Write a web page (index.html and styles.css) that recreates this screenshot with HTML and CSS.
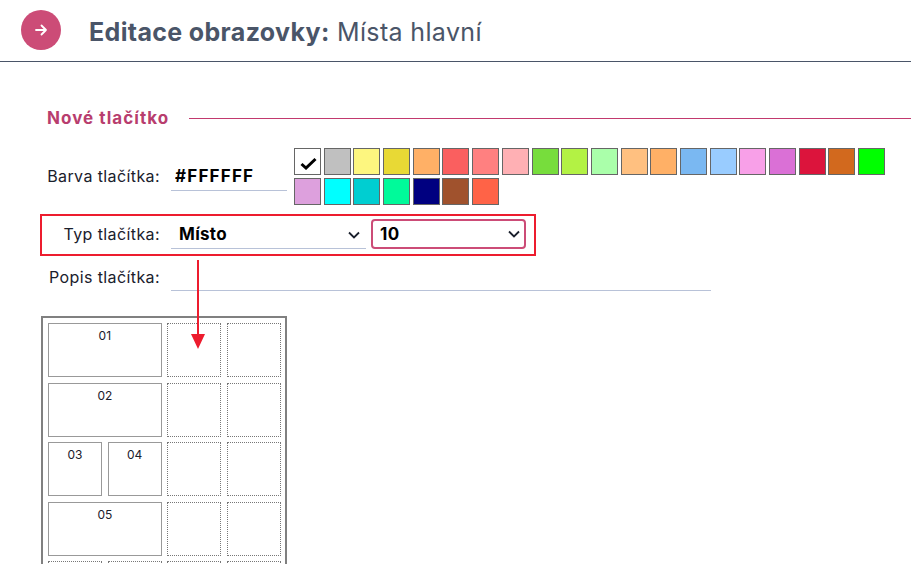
FILE: index.html
```html
<!DOCTYPE html>
<html lang="cs">
<head>
	<meta charset="utf-8">
	<title>Editace obrazovky</title>
	<link rel="stylesheet" href="styles.css">
</head>
<body>
<div id="container">

	<div class="header">
		<a class="back" href="#">
			<svg width="14" height="14" viewBox="0 0 14 14" fill="none" stroke="#fff" stroke-width="1.8" stroke-linecap="round" stroke-linejoin="round"><path d="M2 7h10M7.500 2.500 12 7l-4.500 4.500"/></svg>
		</a>
		<h1><b>Editace obrazovky:</b> Místa hlavní</h1>
	</div>

	<div class="body">
		<div class="section-title">
			<h2>Nové tlačítko</h2>
			<span class="section-line"></span>
		</div>

		<div class="row row-color">
			<label class="row-label">Barva tlačítka:</label>
			<input class="field field-hex" type="text" value="#FFFFFF">
			<div class="swatches">
				<span class="swatch swatch-on">
					<svg width="17" height="13" viewBox="0 0 17 13"><path d="M1.500 7 6 11 15.500 2" fill="none" stroke="#000" stroke-width="3"/></svg>
				</span>
				<span class="swatch c-silver"></span>
				<span class="swatch c-lemon"></span>
				<span class="swatch c-mustard"></span>
				<span class="swatch c-orange"></span>
				<span class="swatch c-red"></span>
				<span class="swatch c-salmon"></span>
				<span class="swatch c-rose"></span>
				<span class="swatch c-green"></span>
				<span class="swatch c-lime"></span>
				<span class="swatch c-mint"></span>
				<span class="swatch c-peach"></span>
				<span class="swatch c-orange"></span>
				<span class="swatch c-sky"></span>
				<span class="swatch c-pale"></span>
				<span class="swatch c-pink"></span>
				<span class="swatch c-orchid"></span>
				<span class="swatch c-crimson"></span>
				<span class="swatch c-choco"></span>
				<span class="swatch c-neon"></span>
				<span class="swatch c-plum"></span>
				<span class="swatch c-cyan"></span>
				<span class="swatch c-teal"></span>
				<span class="swatch c-spring"></span>
				<span class="swatch c-navy"></span>
				<span class="swatch c-sienna"></span>
				<span class="swatch c-tomato"></span>
			</div>
		</div>

		<div class="row row-type">
			<label class="row-label">Typ tlačítka:</label>
			<div class="select-wrap select-type">
				<select class="field field-type"><option>Místo</option></select>
				<svg class="chevron" width="12" height="8" viewBox="0 0 12 8"><path d="M1 1.500 6 6.500 11 1.500" fill="none" stroke="#1a202c" stroke-width="1.800"/></svg>
			</div>
			<div class="select-wrap select-place">
				<select class="field field-place"><option>10</option></select>
				<svg class="chevron" width="12" height="8" viewBox="0 0 12 8"><path d="M1 1.500 6 6.500 11 1.500" fill="none" stroke="#1a202c" stroke-width="1.800"/></svg>
			</div>
		</div>

		<div class="row row-desc">
			<label class="row-label">Popis tlačítka:</label>
			<input class="field field-desc" type="text">
		</div>

		<div class="screen">
			<div class="cell cell-wide">01</div>
			<div class="cell cell-empty"></div>
			<div class="cell cell-empty"></div>
			<div class="cell cell-wide">02</div>
			<div class="cell cell-empty"></div>
			<div class="cell cell-empty"></div>
			<div class="cell">03</div>
			<div class="cell">04</div>
			<div class="cell cell-empty"></div>
			<div class="cell cell-empty"></div>
			<div class="cell cell-wide">05</div>
			<div class="cell cell-empty"></div>
			<div class="cell cell-empty"></div>
			<div class="cell cell-empty"></div>
			<div class="cell cell-empty"></div>
			<div class="cell cell-empty"></div>
			<div class="cell cell-empty"></div>
		</div>
	</div>

	<!-- annotation drawn over the form -->
	<div class="note-box"></div>
	<svg class="note-arrow" width="14" height="92" viewBox="0 0 14 92">
		<path d="M7 0v76" stroke="#ed1c2e" stroke-width="2" fill="none"/>
		<path d="M0 74h14L7 89z" fill="#ed1c2e"/>
	</svg>

</div>
</body>
</html>
```

FILE: styles.css
```css
/* Reset */

* { margin: 0; padding: 0; box-sizing: border-box; }

html, body {
	height: 100%;
	overflow: hidden;
}

#container {
	position: relative;
	height: 100%;
	overflow: hidden;
	background-color: white;
	color: #1a202c;
	font-family: Inter, "Open Sans", sans-serif;
	font-size: 16px;
	letter-spacing: 0.4px;
}


/* Header */

.header {
	display: flex;
	align-items: center;
	height: 62px;
	padding: 0 0 2px 21px;
	border-bottom: solid 1px #4a5568;
}

.back {
	display: flex;
	align-items: center;
	justify-content: center;
	width: 40px;
	height: 40px;
	border-radius: 50%;
	background-color: #cc4c77;
}

.header h1 {
	margin: 5px 0 0 28px;
	font-size: 25px;
	font-weight: 400;
	letter-spacing: 0.35px;
	color: #4a5568;
}

.header b {
	font-weight: 700;
}


/* Section title */

.body {
	padding: 0 0 0 47px;
}

.section-title {
	display: flex;
	align-items: center;
	height: 24px;
	margin-top: 44px;
}

.section-title h2 {
	font-size: 17px;
	font-weight: 700;
	letter-spacing: 1.05px;
	color: #b83d6e;
}

.section-line {
	flex: 1;
	margin-left: 20px;
	border-top: solid 1px #c2396e;
}


/* Form rows */

.row {
	display: flex;
	align-items: center;
}

.row-label {
	flex: none;
	width: 113px;
	margin-right: 11px;
	text-align: right;
	white-space: nowrap;
}

.field {
	border: none;
	border-bottom: solid 1px #b8c2d8;
	outline: none;
	background-color: white;
	color: #000;
	font-family: inherit;
	font-size: 17px;
	font-weight: 700;
	letter-spacing: 0.3px;
}

.row-color {
	align-items: flex-start;
	margin-top: 18px;
}

.row-color .row-label {
	margin-top: 18px;
}

.field-hex {
	width: 116px;
	height: 30px;
	margin-top: 13px;
	padding-left: 4px;
	letter-spacing: 1.2px;
}

.swatches {
	display: flex;
	flex-wrap: wrap;
	gap: 3px 2.7px;
	width: 594px;
	margin-left: 7px;
}

.swatch {
	display: flex;
	align-items: center;
	justify-content: center;
	width: 27px;
	height: 27px;
	border: solid 1px #666;
}

.swatch svg {
	margin: 4px 0 0 2px;
}

.c-silver { background-color: #c0c0c0; }
.c-lemon { background-color: #fdf67f; }
.c-mustard { background-color: #e8d935; }
.c-orange { background-color: #ffb066; }
.c-red { background-color: #fa5f5f; }
.c-salmon { background-color: #ff8080; }
.c-rose { background-color: #ffb0b4; }
.c-green { background-color: #77dd3c; }
.c-lime { background-color: #b3f244; }
.c-mint { background-color: #aaffaa; }
.c-peach { background-color: #ffc080; }
.c-sky { background-color: #7ab8f2; }
.c-pale { background-color: #99ccff; }
.c-pink { background-color: #f8a0e8; }
.c-orchid { background-color: #da70d6; }
.c-crimson { background-color: #dc143c; }
.c-choco { background-color: #d2691e; }
.c-neon { background-color: #00ff00; }
.c-plum { background-color: #dda0dd; }
.c-cyan { background-color: #00ffff; }
.c-teal { background-color: #00ced1; }
.c-spring { background-color: #00fa9a; }
.c-navy { background-color: #000080; }
.c-sienna { background-color: #a0522d; }
.c-tomato { background-color: #ff6347; }

.row-type {
	margin-top: 14px;
}

.select-wrap {
	position: relative;
	display: flex;
}

.select-wrap select {
	appearance: none;
	width: 100%;
}

.chevron {
	position: absolute;
	top: 11px;
	right: 6px;
	pointer-events: none;
}

.select-type {
	width: 195px;
}

.select-place {
	width: 155px;
	margin-left: 5px;
}

.field-type {
	height: 29px;
	padding-left: 8px;
}

.field-place {
	height: 30px;
	padding-left: 7px;
	border: solid 2px #cc4c77;
	border-radius: 4px;
}

.row-desc {
	align-items: flex-end;
	margin-top: 12px;
}

.row-desc .row-label {
	margin-bottom: 4px;
}

.field-desc {
	width: 540px;
	height: 30px;
}


/* Screen preview */

.screen {
	display: grid;
	grid-template-columns: 54px 54px 54px 54px;
	grid-auto-rows: 54px;
	column-gap: 5.7px;
	row-gap: 5.5px;
	width: 246px;
	margin: 25px 0 0 -6px;
	padding: 5px;
	border: solid 2px #808080;
}

.cell {
	padding-top: 4px;
	border: solid 1px #999;
	font-size: 12px;
	letter-spacing: 0;
	text-align: center;
}

.cell-wide {
	grid-column: span 2;
}

.cell-empty {
	border: dotted 1px #777;
}


/* Annotation */

.note-box {
	position: absolute;
	left: 40px;
	top: 214px;
	width: 496px;
	height: 42px;
	border: solid 2px #ed1c2e;
}

.note-arrow {
	position: absolute;
	left: 191px;
	top: 260px;
}
```
